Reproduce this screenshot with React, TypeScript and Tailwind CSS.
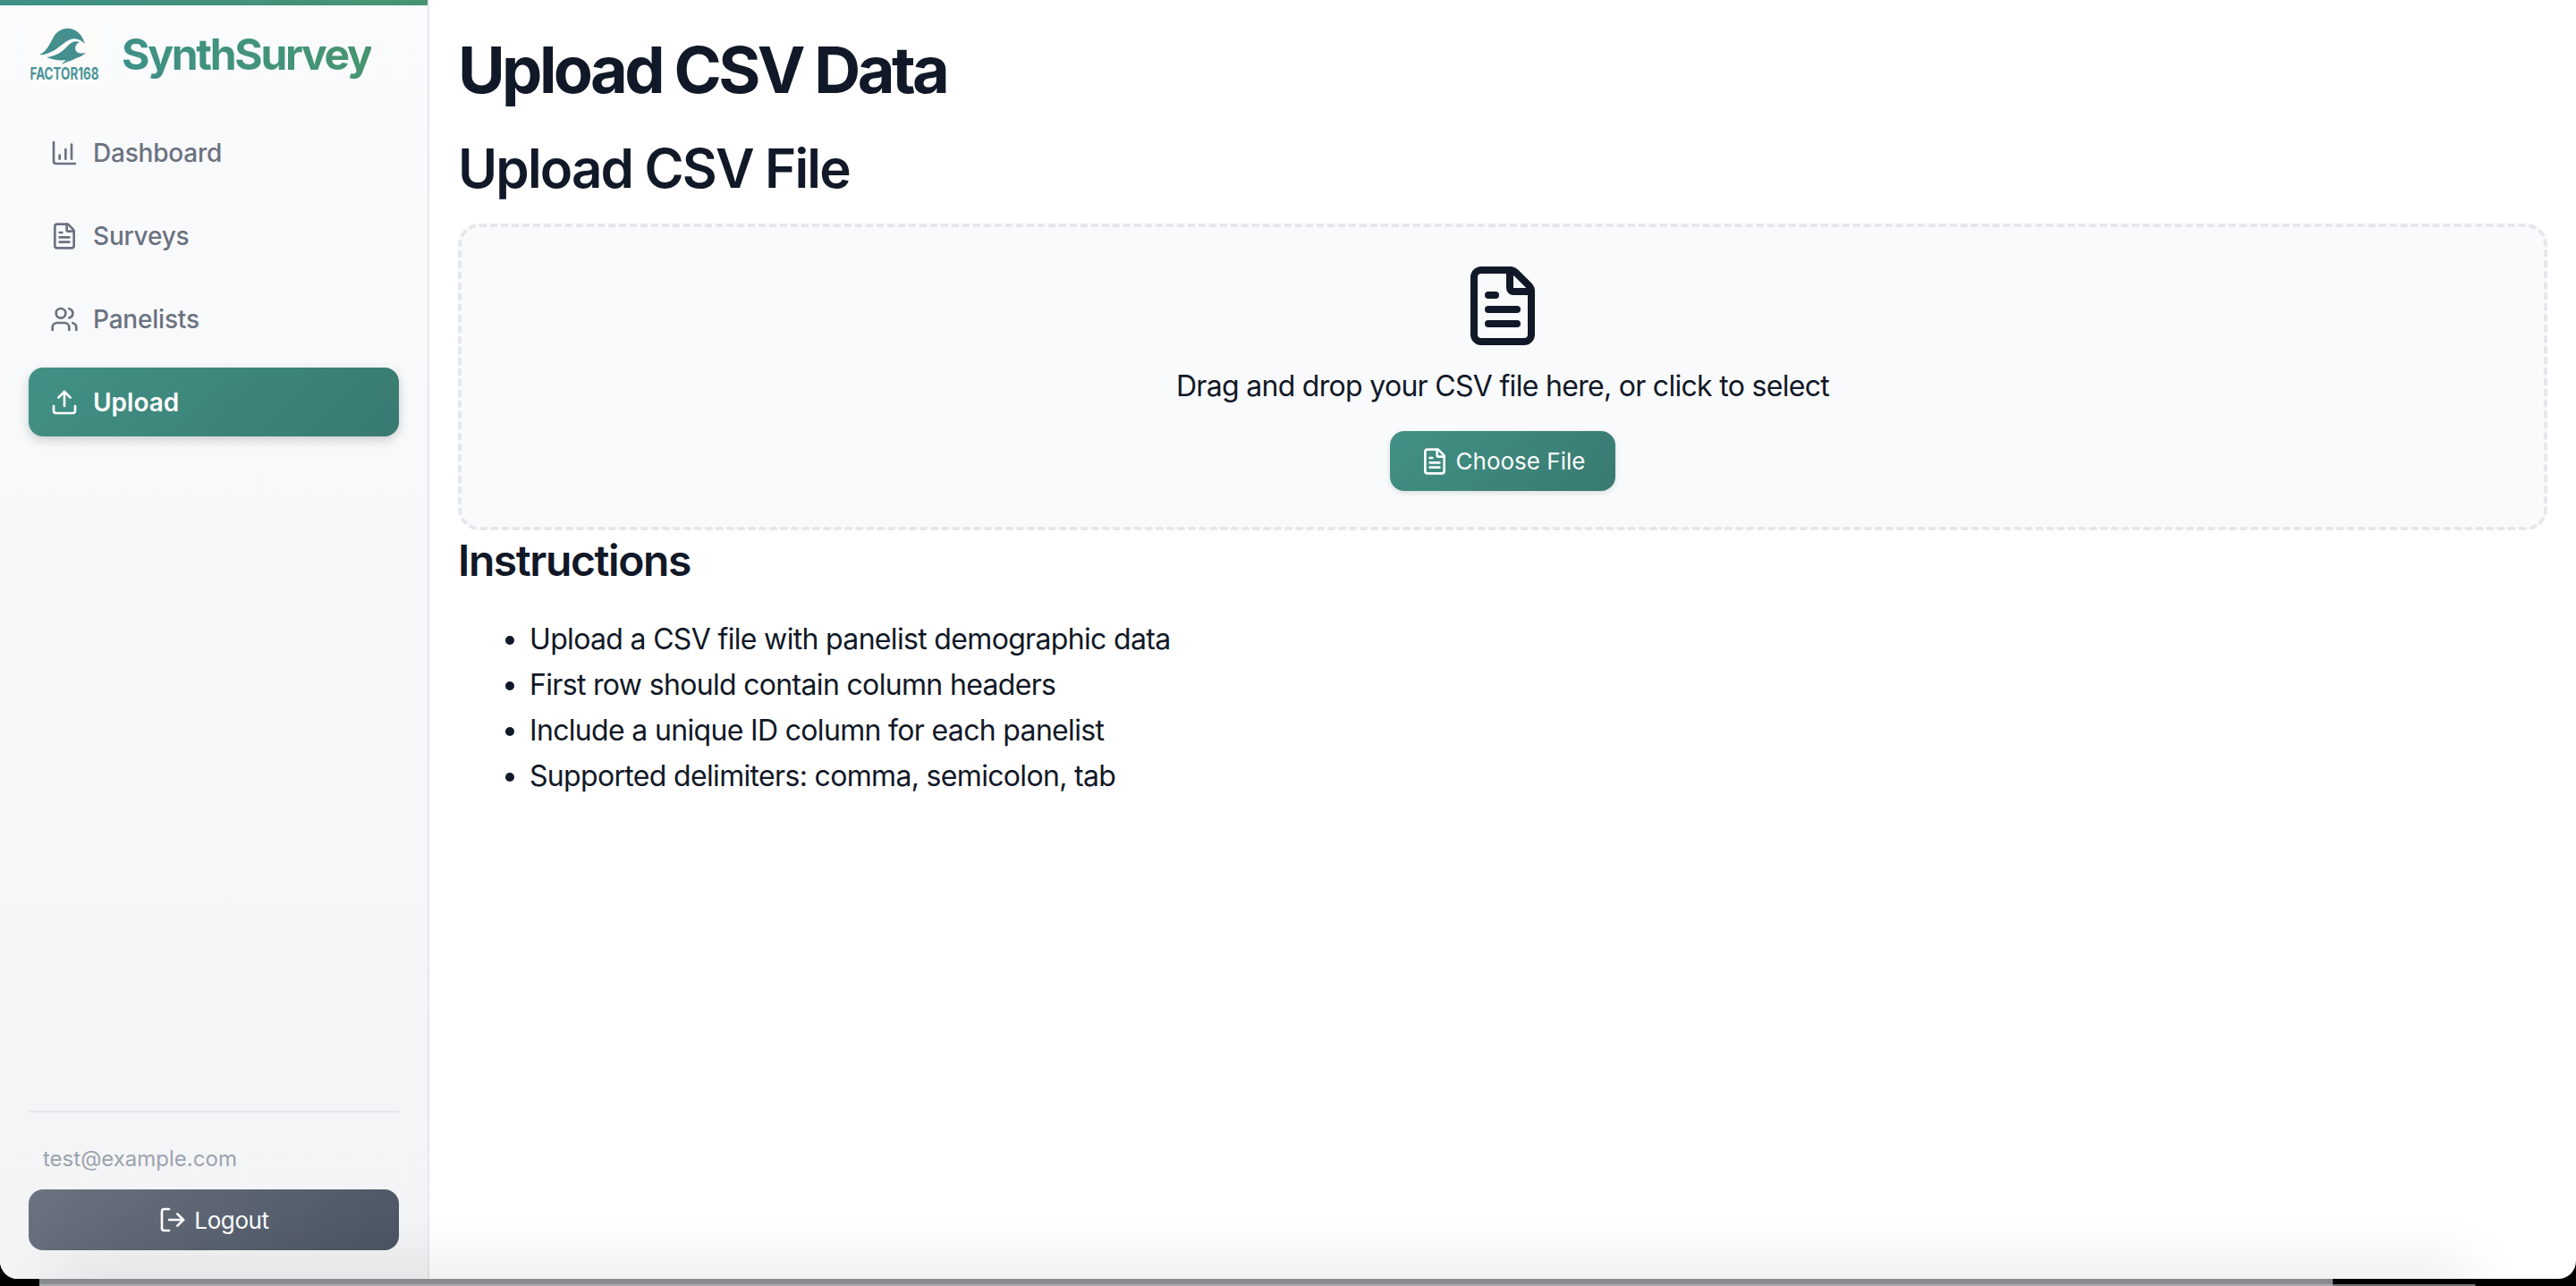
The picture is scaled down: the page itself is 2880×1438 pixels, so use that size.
import { ChartColumnIncreasing, FileText, LogOut, Upload, Users } from "lucide-react";

const navItems = [
  { label: "Dashboard", icon: ChartColumnIncreasing },
  { label: "Surveys", icon: FileText },
  { label: "Panelists", icon: Users },
  { label: "Upload", icon: Upload, active: true },
];

const instructions = [
  "Upload a CSV file with panelist demographic data",
  "First row should contain column headers",
  "Include a unique ID column for each panelist",
  "Supported delimiters: comma, semicolon, tab",
];

function FactorLogo() {
  return (
    <svg viewBox="0 0 80 62" className="h-[62px] w-[80px] shrink-0 overflow-visible bg-[#fdfcfa]">
      <path
        d="M12 31C20 28 23 20 27 13C31 5 38 1 46 2C54 3 60 9 63 19C58 14 52 12 47 14C39 17 33 25 25 28C21 30 16 32 12 31Z"
        fill="#43908f"
      />
      <path
        d="M20 34C30 33 38 28 44 21C48 17 52 15 57 17C53 19 51 23 53 27C55 30 59 30 64 29C61 32 57 34 53 35C49 38 44 38 37 42C39 39 41 38 42 37C35 38 27 37 20 34Z"
        fill="#43908f"
      />
      <text
        x="1.5"
        y="59"
        fontFamily="Inter, sans-serif"
        fontWeight="700"
        fontSize="19"
        fill="#4a9499"
        textLength="77"
        lengthAdjust="spacingAndGlyphs"
      >
        FACTOR168
      </text>
    </svg>
  );
}

function Sidebar() {
  return (
    <aside className="flex h-full w-[480px] shrink-0 flex-col border-r-2 border-[#e5e7eb] bg-gradient-to-b from-[#fafbfd] to-[#f3f4f6]">
      <div className="h-[6px] bg-gradient-to-r from-[#3f8f87] to-[#469470]" />
      <div className="flex items-center gap-[24px] px-8 pt-6">
        <FactorLogo />
        <span className="bg-gradient-to-r from-[#3f9088] to-[#46956f] bg-clip-text text-[48px] leading-[62px] font-bold tracking-[-2.3px] text-transparent">
          SynthSurvey
        </span>
      </div>
      <nav className="mt-10 flex flex-col gap-4 px-8">
        {navItems.map((item) => (
          <a
            key={item.label}
            className={
              item.active
                ? "flex h-[77px] items-center gap-4 rounded-2xl bg-[linear-gradient(135deg,#429185,#387a71)] px-6 text-[28px] font-semibold text-white shadow-[0_4px_12px_rgba(0,0,0,0.18)]"
                : "flex h-[77px] items-center gap-4 rounded-2xl px-6 text-[28px] font-medium tracking-[-0.2px] text-[#6b7280]"
            }
          >
            <item.icon className="size-8" strokeWidth={2} />
            {item.label}
          </a>
        ))}
      </nav>
      <div className="mx-8 mt-auto border-t-2 border-[#e5e7eb] pt-[34px] pb-8">
        <p className="px-4 text-[24px] leading-[36px] text-[#9ca3af]">test@example.com</p>
        <button className="mt-4 flex h-[68px] w-full items-center justify-center gap-2 rounded-2xl bg-[linear-gradient(135deg,#6b7280,#4b5563)] text-[26px] tracking-[-0.4px] text-white">
          <LogOut className="size-8" strokeWidth={2} />
          Logout
        </button>
      </div>
    </aside>
  );
}

function DropZone() {
  return (
    <div className="mt-[26px] flex h-[343px] flex-col items-center rounded-3xl border-4 border-dashed border-[#e5e7eb] bg-[#f9fafb] pt-10">
      <FileText className="size-24 text-[#111827]" strokeWidth={2} />
      <p className="mt-[18px] text-[32px] leading-[48px] tracking-[-0.7px] text-[#111827]">
        Drag and drop your CSV file here, or click to select
      </p>
      <button className="mt-[26px] flex h-[67px] w-[252px] items-center justify-center gap-2 rounded-2xl bg-[linear-gradient(135deg,#429185,#387a71)] text-[26px] text-white shadow-[0_2px_6px_rgba(0,0,0,0.12)]">
        <FileText className="size-8" strokeWidth={2} />
        Choose File
      </button>
    </div>
  );
}

export default function App() {
  return (
    <div className="flex h-[1438px] w-[2880px] flex-col overflow-hidden bg-black font-['Inter',sans-serif]">
      <div className="relative flex h-[1430px] shrink-0 overflow-hidden rounded-b-[20px] bg-white">
        <Sidebar />
        <main className="min-w-0 flex-1 px-8 pt-[38px] text-[#111827]">
          <h1 className="text-[72px] leading-[80px] font-bold tracking-[-3.6px]">Upload CSV Data</h1>
          <h2 className="mt-[34px] text-[60px] leading-[72px] font-semibold tracking-[-1.85px]">Upload CSV File</h2>
          <DropZone />
          <h3 className="mt-[6px] text-[48px] leading-[56px] font-semibold tracking-[-1.4px]">Instructions</h3>
          <ul className="mt-[34px] list-disc pl-[80px] text-[32px] leading-[51px] tracking-[-0.67px]">
            {instructions.map((line) => (
              <li key={line}>{line}</li>
            ))}
          </ul>
        </main>
        {/* shadow falling on the window's lower edge */}
        <div className="pointer-events-none absolute right-[120px] -bottom-[20px] left-[60px] h-[20px] shadow-[0_0_70px_rgba(0,0,0,0.24)]" />
      </div>
      <div className="flex h-[8px] shrink-0">
        <div className="w-[44px] shrink-0" />
        <div className="flex w-[2564px] shrink-0 flex-col">
          <div className="h-[6px] bg-[#8a8b8f]" />
          <div className="h-[2px] bg-[#a9aaad]" />
        </div>
        <div className="flex flex-1 flex-col">
          <div className="h-[6px]" />
          <div className="mr-[112px] h-[2px] rounded-tr-lg bg-[#6f7073]" />
        </div>
      </div>
    </div>
  );
}
